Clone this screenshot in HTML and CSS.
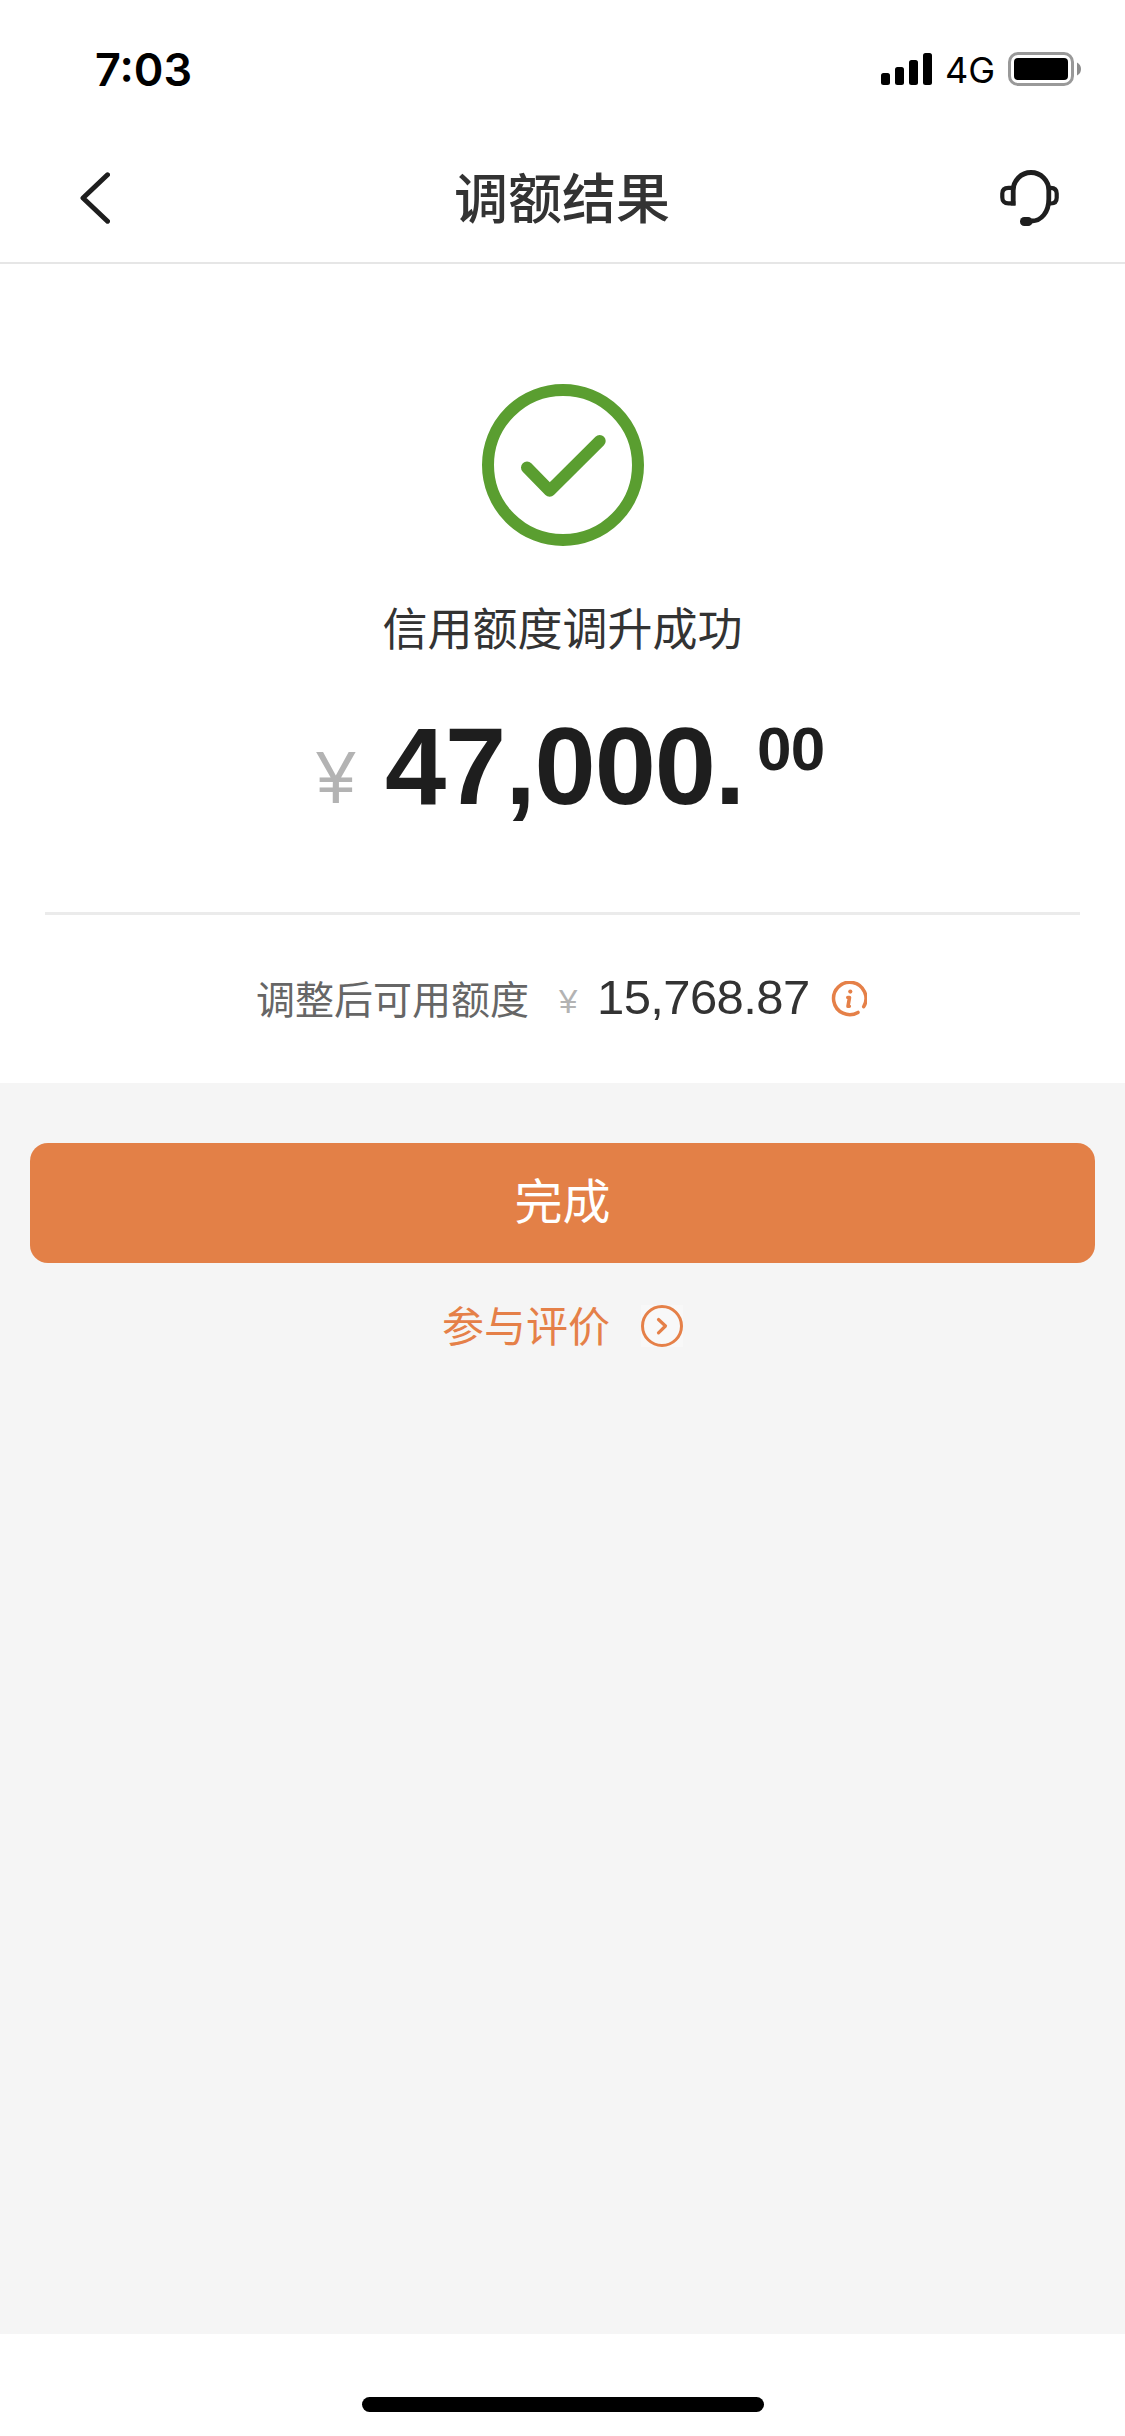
FILE: index.html
```html
<!DOCTYPE html>
<html lang="zh-CN">
<head>
<meta charset="utf-8">
<title>调额结果</title>
<link rel="stylesheet" href="styles.css">
</head>
<body>
<div class="screen">
  <div class="status">
    <span class="time">7:03</span>
    <div class="status-right">
      <svg class="signal" width="51" height="32" viewBox="0 0 51 32"><rect y="20" width="9" height="12" rx="2.5"/><rect x="14" y="14" width="9" height="18" rx="2.5"/><rect x="28" y="7" width="9" height="25" rx="2.5"/><rect x="42" width="9" height="32" rx="2.5"/></svg>
      <span class="network">4G</span>
      <svg class="battery" width="73" height="34" viewBox="0 0 73 34"><rect x="1.5" y="1.5" width="63" height="31" rx="8.5" fill="none" stroke="#999" stroke-width="3"/><rect x="6" y="6" width="54" height="22" rx="4"/><path d="M69 10.5v13q4-2 4-6.5t-4-6.5z" fill="#8c8c8c"/></svg>
    </div>
  </div>
  <header class="nav">
    <svg class="back" width="30" height="52" viewBox="0 0 30 52" fill="none" stroke="#1e1e1e" stroke-width="5" stroke-linecap="round" stroke-linejoin="round"><path d="M27.5 2.8 3 26l24.500 23.200"/></svg>
    <h1 class="title">调额结果</h1>
    <svg class="service" width="60" height="56" viewBox="0 0 60 56" fill="none" stroke="#1e1e1e" stroke-width="4.800"><path d="M13.200 35.500V20.500a17.800 18 0 0 1 35.600 0V29c0 13-7.300 22-17.300 22"/><path d="M15.400 33.400H8.500q-6.200 0-6.200-6.200V23.500q0-5.700 6.200-5.700h5" stroke-width="4.200"/><path d="M48.500 17.800h2.200q6 0 6 5.700v4.300q0 5.700-6 5.700h-2.200" stroke-width="4.200"/><rect x="20" y="47" width="12.500" height="9" rx="4.300" fill="#1e1e1e" stroke="none"/></svg>
  </header>
  <main class="result">
    <svg class="check" width="162" height="162" viewBox="0 0 162 162" fill="none" stroke="#5a9e30"><circle cx="81" cy="81" r="75" stroke-width="12"/><path d="M45 83.500 67.700 106.700 117.700 57" stroke-width="12" stroke-linecap="round" stroke-linejoin="round"/></svg>
    <p class="message">信用额度调升成功</p>
    <div class="amount"><span class="yen">¥</span><span class="whole">47,000.</span><span class="cents">00</span></div>
    <div class="available">
      <span class="label">调整后可用额度</span><span class="small-yen">¥</span><span class="value">15,768.87</span>
      <svg class="info" width="36" height="36" viewBox="0 0 36 36" fill="none" stroke="#e58048"><path d="M27 31.400A16.200 16.200 0 1 1 32.700 25.700" stroke-width="3.500" stroke-linecap="round"/><path d="M16.800 16.500h1.700L17 25.200h1.300" stroke-width="3.600" stroke-linejoin="round" stroke-linecap="round"/><circle cx="19.300" cy="10.600" r="2.100" fill="#e58048" stroke="none"/></svg>
    </div>
  </main>
  <section class="actions">
    <button class="done">完成</button>
    <a class="rate"><span class="rate-text">参与评价</span>
      <svg width="42" height="42" viewBox="0 0 42 42" fill="none" stroke="#e58048"><rect width="42" height="42" fill="#f8f8f8" stroke="none"/><circle cx="21" cy="21" r="19.500" stroke-width="3"/><path d="M17.500 14.500 24.500 21l-7 6.800" stroke-width="3.200" stroke-linecap="round" stroke-linejoin="round"/></svg>
    </a>
  </section>
  <footer class="home"><div class="home-bar"></div></footer>
</div>
</body>
</html>
```
FILE: styles.css
```css
* { box-sizing: border-box; }
body { margin: 0; font-family: "Liberation Sans", "Noto Sans CJK SC", sans-serif; background: #fff; }
svg { display: block; flex: none; }
.screen { width: 1125px; height: 2436px; display: flex; flex-direction: column; background: #fff; }
.status { height: 132px; padding: 42px 44px 0 95px; display: flex; justify-content: space-between; align-items: flex-start; font-family: Inter, sans-serif; color: #000; }
.time { font-size: 45px; font-weight: 600; line-height: 54px; padding-top: 1px; }
.status-right { display: flex; align-items: flex-start; padding-top: 10px; }
.signal { margin-top: 1px; }
.network { font-size: 36px; line-height: 36px; width: 76px; padding-left: 13px; white-space: nowrap; }
.nav { height: 132px; display: flex; justify-content: space-between; align-items: center; padding: 2px 65px 0 80px; border-bottom: 2px solid #e6e6e6; }
.back { margin-right: 14px; }
.title { margin: 0; padding-top: 4px; font-size: 54px; line-height: 80px; font-weight: 500; color: #333; }
.result { height: 819px; padding: 120px 45px 0; display: flex; flex-direction: column; align-items: center; }
.message { margin: 51px 0 2px; font-size: 45px; line-height: 67px; color: #333; }
.amount { width: 100%; height: 249px; padding: 45px 0 0 270px; display: flex; align-items: flex-start; border-bottom: 3px solid #ebebeb; line-height: 1; white-space: nowrap; }
.yen { font-size: 75px; color: #b3b3b3; width: 70px; margin-top: 29px; transform: scaleX(0.94); transform-origin: 22px 0; }
.whole { font-size: 110px; font-weight: 700; color: #1e1e1e; width: 372px; letter-spacing: -1.1px; }
.cents { font-size: 62px; font-weight: 700; color: #1e1e1e; margin-top: 7px; letter-spacing: -0.8px; }
.available { width: 100%; padding: 52px 0 0 211px; display: flex; align-items: center; line-height: 66px; white-space: nowrap; }
.label { font-size: 39px; color: #666; width: 303px; padding-top: 1px; margin-bottom: -1px; }
.small-yen { font-size: 33px; color: #b3b3b3; width: 38px; padding-top: 2px; margin-bottom: -2px; }
.value { font-size: 49px; letter-spacing: -0.6px; color: #333; width: 234px; margin-top: -6px; }
.info { margin-top: -2px; }
.actions { height: 1251px; padding: 60px 30px 0; background: #f5f5f5; display: flex; flex-direction: column; }
.done { height: 120px; border: 0; border-radius: 18px; background: #e38047; color: #fff; padding: 0 0 11px; font: 48px/72px "Noto Sans CJK SC", sans-serif; }
.rate { display: flex; justify-content: center; align-items: center; gap: 31px; margin-top: 32px; color: #e58048; font-size: 42px; line-height: 62px; }
.rate-text { padding-top: 2px; margin-bottom: -2px; }
.home { flex: 1; padding: 63px 0 0 362px; }
.home-bar { width: 402px; height: 15px; border-radius: 7.5px; background: #000; }
```
